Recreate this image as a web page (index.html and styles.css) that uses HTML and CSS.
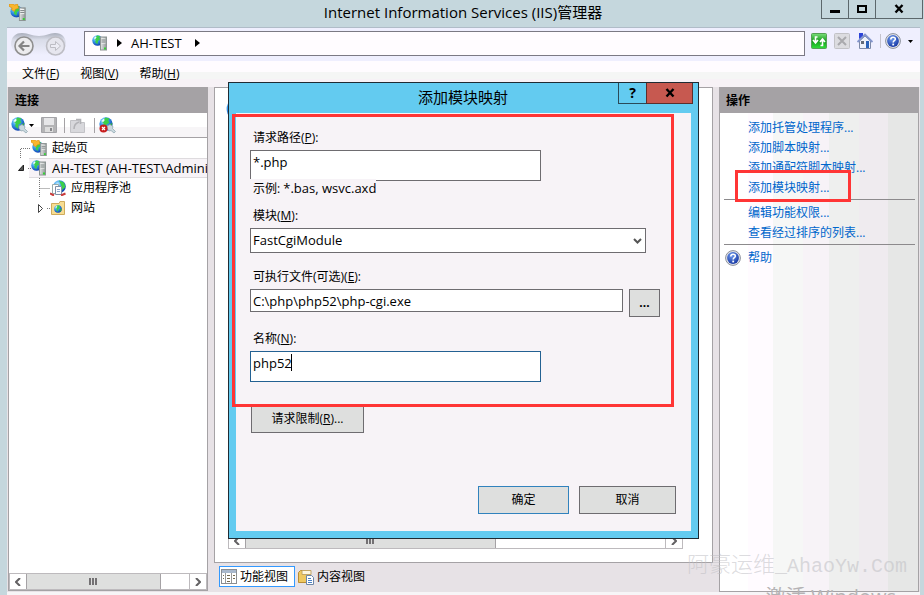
FILE: index.html
```html
<!DOCTYPE html>
<html lang="zh-CN">
  <head>
    <meta charset="UTF-8" />
    <meta name="viewport" content="width=device-width, initial-scale=1.0" />
    <title>Internet Information Services (IIS)管理器</title>
    <link rel="stylesheet" href="styles.css">
  </head>
  <body>
    <!-- Shared icons -->
    <svg class="sprite" width="0" height="0">
      <defs>
        <radialGradient id="globe-fill" cx="35%" cy="30%" r="75%">
          <stop offset="0" stop-color="#c8f0ff" />
          <stop offset="0.4" stop-color="#3aa0ee" />
          <stop offset="1" stop-color="#0b3cae" />
        </radialGradient>
        <radialGradient id="help-fill" cx="40%" cy="30%" r="75%">
          <stop offset="0" stop-color="#6f9bee" />
          <stop offset="1" stop-color="#1233a0" />
        </radialGradient>
        <linearGradient id="tower-fill" x1="0" x2="1">
          <stop offset="0" stop-color="#e4e6e6" />
          <stop offset="1" stop-color="#8f9595" />
        </linearGradient>
        <linearGradient id="pill-fill" x1="0" x2="0" y1="0" y2="1">
          <stop offset="0" stop-color="#a9aebb" />
          <stop offset="0.3" stop-color="#d9dce8" />
          <stop offset="1" stop-color="#efeffe" />
        </linearGradient>
        <linearGradient id="green-fill" x1="0" x2="0" y1="0" y2="1">
          <stop offset="0" stop-color="#7be07b" />
          <stop offset="0.5" stop-color="#169c1c" />
          <stop offset="1" stop-color="#2fe03a" />
        </linearGradient>
      </defs>
      <symbol id="globe" viewBox="0 0 12 12">
        <circle cx="6" cy="6" r="5.7" fill="url(#globe-fill)" />
        <path d="M5.500 .5 9 1.2 8 3 9 5 6.500 6.500 6 10 3.500 8 4 5.500 2.500 4Z" fill="#3ccf4a" />
        <path d="M9 6.500 11.500 5 10.500 9 8.500 10Z" fill="#2fae46" />
        <path d="M2 3.500 4 1.500 5 2.500 3.500 4.500Z" fill="#e8fbff" />
      </symbol>
      <symbol id="tower" viewBox="0 0 7 14">
        <rect x=".5" y=".5" width="6" height="13" fill="url(#tower-fill)" stroke="#8d9494" />
        <path d="M1.5 2.500h4M1.5 4.500h4M1.5 6.500h4" stroke="#fff" />
        <path d="M1.5 3.500h4M1.5 5.500h4" stroke="#7d8484" />
        <rect x="4" y="11" width="2" height="2" fill="#35d035" />
      </symbol>
      <symbol id="server" viewBox="0 0 16 16">
        <use href="#globe" x="0" y="0" width="11" height="11" />
        <use href="#tower" x="8" y="1" width="7" height="15" />
      </symbol>
      <symbol id="server-start" viewBox="0 0 16 16">
        <use href="#globe" x="1" y="1" width="12" height="12" />
        <path d="M0 0h4l1 1 3-1 1 4-3 1-1 2-3-2 1-1-3-2Z" fill="#f9b62c" stroke="#d98c10" stroke-width=".6" />
        <use href="#tower" x="9" y="3" width="7" height="13" />
      </symbol>
      <symbol id="help" viewBox="0 0 16 16">
        <circle cx="8" cy="8" r="7.4" fill="#e4e6ec" stroke="#8a8f9a" />
        <circle cx="8" cy="8" r="5.9" fill="url(#help-fill)" />
        <path d="M5.8 6.4C5.8 3.4 10.4 3.6 10.3 6.2 10.2 7.7 8.2 7.7 8.2 9.4" fill="none" stroke="#fff" stroke-width="1.6" />
        <rect x="7.3" y="10.6" width="1.8" height="1.8" fill="#fff" />
      </symbol>
      <symbol id="connect" viewBox="0 0 17 17">
        <use href="#globe" x="0" y="0" width="14" height="14" />
        <path d="M8 9l3-1.500 3 2-.5 2 3 3-1.500 1.500-3-2.500-2 .5-2-2.500Z" fill="#c9d8de" stroke="#8aa2ac" stroke-width=".7" />
      </symbol>
    </svg>

    <div class="window">
      <header class="titlebar">
        <svg class="app-icon" width="17" height="17"><use href="#server-start" /></svg>
        <h1>Internet Information Services (IIS)管理器</h1>
        <div class="window-buttons">
          <button type="button" class="min" aria-label="最小化">
            <svg width="10" height="10"><path d="M0 7.500h10" stroke="#000" stroke-width="3" /></svg>
          </button>
          <button type="button" class="max" aria-label="最大化">
            <svg width="10" height="10"><rect x="1" y="2" width="8" height="6" fill="none" stroke="#000" stroke-width="2" /></svg>
          </button>
          <button type="button" class="close" aria-label="关闭">
            <svg width="10" height="10"><path d="M1.500 1 8.500 8.500M8.500 1 1.500 8.500" stroke="#000" stroke-width="2.400" /></svg>
          </button>
        </div>
      </header>

      <div class="client">
        <div class="addressbar">
          <svg class="nav" width="56" height="28" viewBox="0 0 56 28">
            <path d="M0 14C0 5 5 2 11 2 18 2 20 5 28 5S38 2 44 2C51 2 55 6 55 14 50 26 40 24 28 24S3 26 0 14Z" fill="url(#pill-fill)" />
            <circle cx="13" cy="15" r="9" fill="#ececee" stroke="#8f8f8f" stroke-width="1.600" />
            <path d="M18.500 15H9M13 10.500 8.500 15 13 19.500" fill="none" stroke="#858585" stroke-width="2.200" />
            <circle cx="44.500" cy="15" r="9" fill="#e6e6ee" stroke="#bdbdc4" stroke-width="1.600" />
            <path d="M39.500 13.500h5v-3l5 4.500-5 4.500v-3h-5Z" fill="#ececf4" stroke="#bdbdc4" />
          </svg>
          <div class="address">
            <svg width="16" height="16"><use href="#server" /></svg>
            <svg width="5" height="8"><path d="M0 0 5 4 0 8Z" /></svg>
            <span>AH-TEST</span>
            <svg class="next" width="5" height="8"><path d="M0 0 5 4 0 8Z" /></svg>
          </div>
          <div class="address-tools">
            <svg width="16" height="16">
              <rect x=".5" y=".5" width="15" height="15" rx="1" fill="url(#green-fill)" stroke="#55a055" />
              <path d="M6.500 4H4.500v5M2 7 4.500 10 7 7M9.500 12.500H11.500v-5M9 9 11.500 6 14 9" fill="none" stroke="#fff" stroke-width="1.600" />
            </svg>
            <svg width="16" height="16">
              <rect x=".5" y=".5" width="15" height="15" rx="1" fill="#dcdce0" stroke="#c2c2c6" />
              <path d="M4 4 12 12M12 4 4 12" stroke="#a9a9ad" stroke-width="2" />
            </svg>
            <svg width="16" height="16">
              <path d="M2.500 8V15.500H13.500V8L8 3Z" fill="#eef2fa" stroke="#7d8aa8" />
              <path d="M2 0h4v4L2 6Z" fill="#2c44d8" />
              <path d="M.5 9 8 1.500 15.500 9" fill="none" stroke="#8496cc" stroke-width="1.800" />
              <rect x="4" y="8" width="3" height="3" fill="#636b78" />
              <rect x="9" y="8" width="3" height="7" fill="#2a62b8" />
            </svg>
            <span class="divider"></span>
            <svg width="16" height="16"><use href="#help" /></svg>
            <svg class="drop" width="5" height="3"><path d="M0 0H5L2.500 3Z" /></svg>
          </div>
        </div>

        <nav class="menubar">
          <a href="#">文件(<u>F</u>)</a>
          <a href="#">视图(<u>V</u>)</a>
          <a href="#">帮助(<u>H</u>)</a>
        </nav>

        <main class="workspace">
          <section class="panel connections">
            <h2>连接</h2>
            <div class="toolbar">
              <svg width="17" height="17"><use href="#connect" /></svg>
              <svg class="drop" width="5" height="3"><path d="M0 0H5L2.500 3Z" /></svg>
              <svg class="save" width="16" height="16">
                <path d="M.5.5h15v15H.5Z" fill="#b4b4b6" stroke="#a4a4a8" />
                <rect x="3" y="1" width="10" height="7" fill="#e6e6e8" />
                <rect x="4" y="10" width="8" height="5" fill="#ddd" />
                <rect x="9" y="11" width="2" height="3" fill="#88888c" />
              </svg>
              <span class="divider"></span>
              <svg class="up" width="15" height="16">
                <path d="M.5 3.500h9l1 2h4v10H.5Z" fill="#d8d8dc" stroke="#c2c2c6" />
                <path d="M4 12C4 8 6 6 9 5M6 2.500h4.500V7" fill="none" stroke="#b2b2b6" stroke-width="1.600" />
              </svg>
              <span class="divider"></span>
              <svg class="disconnect" width="17" height="17">
                <use href="#connect" />
                <circle cx="4.500" cy="11.500" r="4" fill="#c81e1e" />
                <path d="M3 10 6 13M6 10 3 13" stroke="#fff" stroke-width="1.200" />
              </svg>
            </div>
            <ul class="tree">
              <li>
                <svg width="22" height="20"><path class="dots" d="M11.500 20V10.500H22" /></svg>
                <svg width="16" height="16"><use href="#server-start" /></svg>
                <span>起始页</span>
              </li>
              <li class="selected">
                <svg width="22" height="20">
                  <path d="M9.500 12.500H14.500V7Z" fill="#555" stroke="#222" />
                  <path class="dots" d="M19 10.500H22" />
                </svg>
                <svg width="16" height="16"><use href="#server" /></svg>
                <span class="latin">AH-TEST (AH-TEST\Adminis</span>
              </li>
              <li>
                <svg width="41" height="20"><path class="dots" d="M30.500 0V20M30.500 10.500H41" /></svg>
                <svg width="16" height="16">
                  <circle cx="9.500" cy="6.500" r="6.300" fill="url(#globe-fill)" />
                  <path d="M9 .5 14 2.500 15.500 7 12 10 11 5Z" fill="#3ccf4a" />
                  <path d="M2.500 4.500h6v9h-6Z" fill="#fff" stroke="#9aa" />
                  <path d="M5.500 6.500h6v8h-6Z" fill="#fbfcff" stroke="#7f8fa6" />
                  <path d="M7 9.500h3M7 11.500h3" stroke="#8fa8cc" />
                  <path d="M0 13.500 4 15.500M15.500 13.500 11 15.500" stroke="#c83a3a" stroke-width="2" />
                </svg>
                <span>应用程序池</span>
              </li>
              <li>
                <svg width="41" height="20">
                  <path d="M29.500 6.500 33.500 10.500 29.500 14.500Z" fill="#fff" stroke="#444" />
                  <path class="dots" d="M38 10.500H41" />
                </svg>
                <svg width="16" height="16">
                  <path d="M1.500 3.500H9l1-2h4.500v13h-13Z" fill="#f7dd92" stroke="#cfab5c" />
                  <use href="#globe" x="4" y="5" width="8" height="8" />
                </svg>
                <span>网站</span>
              </li>
            </ul>
            <div class="scrollbar">
              <button type="button" aria-label="向左"><svg width="6" height="8"><path d="M5 0 1 4 5 8" /></svg></button>
              <span class="thumb"></span>
              <span class="track"></span>
              <button type="button" aria-label="向右"><svg width="6" height="8"><path d="M1 0 5 4 1 8" /></svg></button>
            </div>
          </section>

          <section class="center">
            <div class="panel feature">
              <svg class="feature-icon" width="26" height="26"><use href="#globe" /></svg>
              <div class="scrollbar">
                <button type="button" aria-label="向左"><svg width="6" height="8"><path d="M5 0 1 4 5 8" /></svg></button>
                <span class="thumb"></span>
                <span class="track"></span>
                <button type="button" aria-label="向右"><svg width="6" height="8"><path d="M1 0 5 4 1 8" /></svg></button>
              </div>
            </div>
            <div class="view-tabs">
              <button type="button" class="active">
                <svg width="16" height="15">
                  <rect x=".5" y=".5" width="15" height="14" fill="#fff" stroke="#8a8d92" />
                  <path d="M1 2.500h14" stroke="#a9b8cc" stroke-width="3" />
                  <path d="M4.500 4v10M10.500 4v10" stroke="#999" />
                  <path d="M2 6.500h1M2 9.500h1M6 6.500h3M6 9.500h3M6 12.500h3M12 6.500h2M12 9.500h2" stroke="#776a50" />
                </svg>
                功能视图
              </button>
              <button type="button">
                <svg width="16" height="16">
                  <path d="M.5 3.500 2.500 1.500h5l1 2h4v10H.5Z" fill="#efc860" stroke="#b98d33" />
                  <path d="M4 1.500h9v4H4Z" fill="#fdf6e0" stroke="#c2a565" />
                  <path d="M8.500 6.500h5l2 2v7h-7Z" fill="#fff" stroke="#6d86a8" />
                  <path d="M10 9.500h3M10 11.500h4M10 13.500h4" stroke="#4a7fc4" />
                </svg>
                内容视图
              </button>
            </div>
          </section>

          <aside class="panel actions">
            <h2>操作</h2>
            <ul>
              <li><a href="#">添加托管处理程序...</a></li>
              <li><a href="#">添加脚本映射...</a></li>
              <li><a href="#">添加通配符脚本映射...</a></li>
              <li class="marked"><a href="#">添加模块映射...</a></li>
              <li class="rule"></li>
              <li><a href="#">编辑功能权限...</a></li>
              <li><a href="#">查看经过排序的列表...</a></li>
              <li class="rule"></li>
              <li class="help"><svg width="16" height="16"><use href="#help" /></svg><a href="#">帮助</a></li>
            </ul>
          </aside>
        </main>
      </div>

      <div class="watermark">
        <span>阿豪运维</span>_AhaoYw.Com
      </div>
      <div class="activation">激活 Windows</div>

      <form class="dialog" role="dialog" aria-labelledby="dialog-title">
        <div class="dialog-title">
          <h2 id="dialog-title">添加模块映射</h2>
          <div class="dialog-buttons">
            <button type="button" class="ask">?</button>
            <button type="button" class="close" aria-label="关闭">
              <svg width="10" height="10"><path d="M1.500 1 8.500 8.500M8.500 1 1.500 8.500" stroke="#000" stroke-width="2.400" /></svg>
            </button>
          </div>
        </div>
        <div class="dialog-body">
          <div class="field path">
            <label for="path">请求路径(<u>P</u>):</label>
            <input class="tall" type="text" id="path" value="*.php" />
            <span class="hint">示例: <span class="latin">*.bas, wsvc.axd</span></span>
          </div>
          <div class="field module">
            <label for="module">模块(<u>M</u>):</label>
            <div class="select">
              <select id="module">
                <option>FastCgiModule</option>
              </select>
              <svg width="9" height="6"><path d="M1 1 4.500 4.500 8 1" fill="none" stroke="#555" stroke-width="2" /></svg>
            </div>
          </div>
          <div class="field exe">
            <label for="exe">可执行文件(可选)(<u>E</u>):</label>
            <div class="browse">
              <input type="text" id="exe" value="C:\php\php52\php-cgi.exe" />
              <button type="button">...</button>
            </div>
          </div>
          <div class="field name">
            <label for="name">名称(<u>N</u>):</label>
            <div class="focused">
              <input class="tall" type="text" id="name" value="php52" />
              <span class="caret"></span>
            </div>
          </div>
          <button type="button" class="limits">请求限制(<u>R</u>)...</button>
          <div class="dialog-footer">
            <button type="submit" class="ok">确定</button>
            <button type="button" class="cancel">取消</button>
          </div>
        </div>
        <div class="mark"></div>
      </form>
    </div>
  </body>
</html>
```

FILE: styles.css
```css
*,
*::before,
*::after {
  box-sizing: border-box;
}

:root {
  --frame: #c5d7dd;
  --chrome: #e7e2e6;
  --panel-border: #a5a2a5;
  --field-border: #6e6c70;
  --dialog-blue: #63cbf0;
  --dialog-bg: #f7f3f7;
  --button-bg: #dedfde;
  --link: #0066cc;
  --mark: #ff3535;
}

body {
  margin: 0;
  font-family: "Open Sans", "Noto Sans CJK SC", sans-serif;
  font-size: 12px;
  line-height: 16px;
  color: #000;
  background: var(--frame);
}

h1,
h2,
ul {
  margin: 0;
  padding: 0;
  font-weight: normal;
  list-style: none;
}

button,
input,
select {
  font: inherit;
  color: inherit;
  border-radius: 0;
  margin: 0;
}

button {
  display: flex;
  align-items: center;
  justify-content: center;
  padding: 0;
}

svg {
  display: block;
  flex: none;
}

a {
  color: inherit;
  text-decoration: none;
}

.sprite {
  position: absolute;
}

.latin {
  font-size: 13px;
}

.window {
  position: relative;
  display: flex;
  flex-direction: column;
  min-height: 100vh;
  overflow: hidden;
}

/* Title bar */
.titlebar {
  display: flex;
  align-items: flex-start;
  height: 27px;
  padding: 0 1px 0 9px;
}

.titlebar h1 {
  flex: 1;
  padding-left: 78px;
  font-size: 15px;
  line-height: 24px;
  text-align: center;
}

.app-icon {
  margin-top: 4px;
}

.window-buttons {
  display: flex;
}

.window-buttons button {
  width: 28px;
  height: 19px;
  margin-left: -1px;
  background: none;
  border: 1px solid #5c676b;
  border-top: 0;
}

.window-buttons .close {
  width: 48px;
}

.client {
  flex: 1;
  display: flex;
  flex-direction: column;
  margin: 0 4px 0 7px;
  background: var(--chrome);
  border-top: 1px solid #b0bcc8;
  border-bottom: 3px solid #f7f5f7;
}

/* Address bar */
.addressbar {
  display: flex;
  align-items: center;
  height: 33px;
  padding: 0 7px 0 4px;
  background: #efeffe;
}

.address {
  flex: 1;
  display: flex;
  align-items: center;
  gap: 9px;
  height: 25px;
  margin: 0 6px 3px 17px;
  padding-left: 7px;
  font-size: 13px;
  background: #fffcff;
  border: 1px solid #7b7984;
}

.address .next {
  margin-left: 4px;
}

.address-tools {
  display: flex;
  align-items: center;
  gap: 7px;
  margin-bottom: 7px;
}

.address-tools .divider {
  width: 1px;
  height: 14px;
  background: #c4c2cc;
}

.address-tools .divider + svg {
  margin-left: -3px;
}

/* Menu */
.menubar {
  display: flex;
  gap: 21px;
  height: 26px;
  padding: 5px 15px;
  background: linear-gradient(#fffcff 11px, #f5f6f5 11px, #f5f6f5 18px, #f7f2f6 18px);
}

/* Panels */
.workspace {
  flex: 1;
  display: flex;
  gap: 6px;
  padding: 0 1px;
}

.panel {
  display: flex;
  flex-direction: column;
  background: #fff;
  border: 1px solid var(--panel-border);
}

.panel h2 {
  height: 25px;
  padding-left: 6px;
  font-size: 12px;
  font-weight: bold;
  line-height: 25px;
  background: var(--panel-border);
}

.connections {
  width: 200px;
  margin-bottom: 1px;
}

.toolbar {
  display: flex;
  align-items: center;
  height: 25px;
  padding-left: 2px;
  background: linear-gradient(#fff 14px, #f7f5f7 14px);
  border-bottom: 1px solid var(--panel-border);
}

.toolbar .divider {
  width: 1px;
  height: 15px;
  background: #a5a2a5;
}

.toolbar .drop {
  margin: 0 7px 0 1px;
}

.toolbar .save {
  margin-right: 7px;
}

.toolbar .up {
  margin: 0 9px 0 5px;
}

.toolbar .disconnect {
  margin-left: 4px;
}

.tree {
  flex: 1;
  overflow: hidden;
}

.tree li {
  display: flex;
  align-items: center;
  height: 20px;
  white-space: nowrap;
}

.tree span {
  margin-left: 5px;
}

.tree .selected {
  background: linear-gradient(#dedbde, #dedbde) 20px 0 / 100% 1px no-repeat,
    linear-gradient(#dedbde, #dedbde) 20px 100% / 100% 1px no-repeat,
    linear-gradient(#f7f3f7, #f7f3f7) 20px 0 / 100% 100% no-repeat;
}

.dots {
  fill: none;
  stroke: #777;
  stroke-dasharray: 1 1;
}

/* Scrollbars */
.scrollbar {
  display: flex;
  height: 17px;
  background: #fff;
  border: 1px solid #bdbabd;
}

.scrollbar button {
  width: 16px;
  background: #fff;
  border: 0;
}

.scrollbar path {
  fill: none;
  stroke: #636163;
  stroke-width: 2;
}

.thumb {
  flex: 135;
  background: linear-gradient(90deg, #737173 2px, transparent 2px 3px, #737173 3px 5px, transparent 5px 6px, #737173 6px) center / 8px 7px no-repeat,
    #dedfde;
  border: solid var(--panel-border);
  border-width: 0 1px;
}

.track {
  flex: 29;
  border-right: 1px solid #bdbabd;
}

/* Feature view */
.center {
  flex: 1;
  display: flex;
  flex-direction: column;
}

.feature {
  flex: 1;
  justify-content: space-between;
  padding: 8px 29px 13px 11px;
}

.feature .scrollbar {
  margin-left: 2px;
}

.feature .thumb {
  flex: 250;
}

.feature .track {
  flex: 170;
}

.view-tabs {
  display: flex;
  gap: 1px;
  padding: 3px 5px 5px;
}

.view-tabs button {
  gap: 3px;
  height: 21px;
  padding: 0 6px 0 1px;
  background: none;
  border: 1px solid transparent;
}

.view-tabs .active {
  background: #fff;
  border-color: #3399ff;
}

/* Actions */
.actions {
  width: 200px;
  background: linear-gradient(90deg, #fff 14%, #fffbff 14% 27%, #f6f7f6 27% 42%, #f7f3f7 42% 55%, #eeefee 55% 70%, #efebef 70% 85%, #e6e7e6 85%);
}

.actions ul {
  padding: 5px 3px 0 4px;
}

.actions li {
  display: flex;
  align-items: center;
  height: 20px;
  padding-left: 24px;
  color: var(--link);
}

.actions .rule {
  height: 5px;
  background: linear-gradient(#8c8a8c, #8c8a8c) 0 1px / 100% 1px no-repeat;
}

.actions .help {
  gap: 7px;
  padding-left: 1px;
}

.marked {
  position: relative;
}

.marked::after {
  content: "";
  position: absolute;
  top: -8px;
  left: 11px;
  width: 116px;
  height: 32px;
  border: 3px solid var(--mark);
}

/* Watermarks */
.watermark,
.activation {
  position: absolute;
  white-space: nowrap;
}

.watermark {
  right: 17px;
  bottom: 15px;
  font-family: "Liberation Mono", "Noto Sans CJK SC", monospace;
  font-size: 20px;
  line-height: 26px;
  color: rgba(190, 190, 195, 0.55);
}

.watermark span {
  font-size: 22px;
  font-weight: 300;
}

.activation {
  right: 28px;
  bottom: 0;
  height: 8px;
  font-size: 20px;
  line-height: 20px;
  color: #b5b3b5;
  overflow: hidden;
}

/* Dialog */
.dialog {
  position: absolute;
  top: 82px;
  left: calc(50% - 234px);
  width: 471px;
  padding: 0 7px 7px;
  background: var(--dialog-blue);
  border: 1px solid #1f2b33;
}

.dialog-title {
  display: flex;
  align-items: flex-start;
  height: 30px;
}

.dialog-title h2 {
  flex: 1;
  padding-left: 72px;
  font-size: 15px;
  line-height: 29px;
  text-align: center;
}

.dialog-buttons {
  display: flex;
  margin-right: -2px;
}

.dialog-buttons button {
  width: 29px;
  height: 21px;
  font-size: 14px;
  font-weight: bold;
  background: none;
  border: 1px solid #2a4a58;
  border-top: 0;
}

.dialog-buttons .close {
  width: 47px;
  margin-left: -1px;
  background: #c75950;
  border-color: #5c2f2c;
}

.dialog-body {
  padding: 17px 15px 17px 14px;
  background: var(--dialog-bg);
}

.field {
  display: flex;
  flex-direction: column;
  gap: 4px;
}

.field label {
  padding-left: 3px;
}

.field input,
.field select {
  width: 100%;
  height: 23px;
  padding: 0 2px;
  font-size: 13px;
  line-height: 16px;
  background: #fff;
  border: 1px solid var(--field-border);
}

.field .tall {
  width: 291px;
  height: 31px;
  padding-bottom: 8px;
}

.path {
  margin-bottom: 11px;
}

.module {
  margin-bottom: 16px;
}

.exe {
  margin-bottom: 14px;
}

/* The hint overlaps the lower edge of the path box */
.hint {
  z-index: 1;
  width: 126px;
  height: 18px;
  margin-top: -6px;
  padding-left: 3px;
  line-height: 18px;
  white-space: nowrap;
  background: var(--dialog-bg);
}

.select {
  position: relative;
  width: 396px;
}

.select select {
  display: block;
  height: 25px;
  padding-bottom: 2px;
  appearance: none;
}

.select svg {
  position: absolute;
  top: 10px;
  right: 4px;
  pointer-events: none;
}

.browse {
  display: flex;
  gap: 6px;
  width: 410px;
}

.dialog-body button {
  height: 28px;
  background: var(--button-bg);
  border: 1px solid var(--field-border);
}

.browse button {
  flex: none;
  width: 31px;
  font-weight: bold;
}

.focused {
  position: relative;
}

.focused input {
  display: block;
  border-color: #236192;
  outline: none;
}

.caret {
  position: absolute;
  top: 3px;
  left: 41px;
  width: 1px;
  height: 17px;
  background: #000;
}

.dialog-body .limits {
  width: 113px;
  margin: 23px 0 0 1px;
}

.dialog-footer {
  display: flex;
  justify-content: flex-end;
  gap: 10px;
  margin-top: 53px;
}

.dialog-footer .ok {
  width: 91px;
  border-color: #3182bd;
}

.dialog-footer .cancel {
  width: 97px;
}

.mark {
  position: absolute;
  top: 31px;
  left: 3px;
  right: 24px;
  height: 293px;
  border: 3px solid var(--mark);
  pointer-events: none;
}
```
